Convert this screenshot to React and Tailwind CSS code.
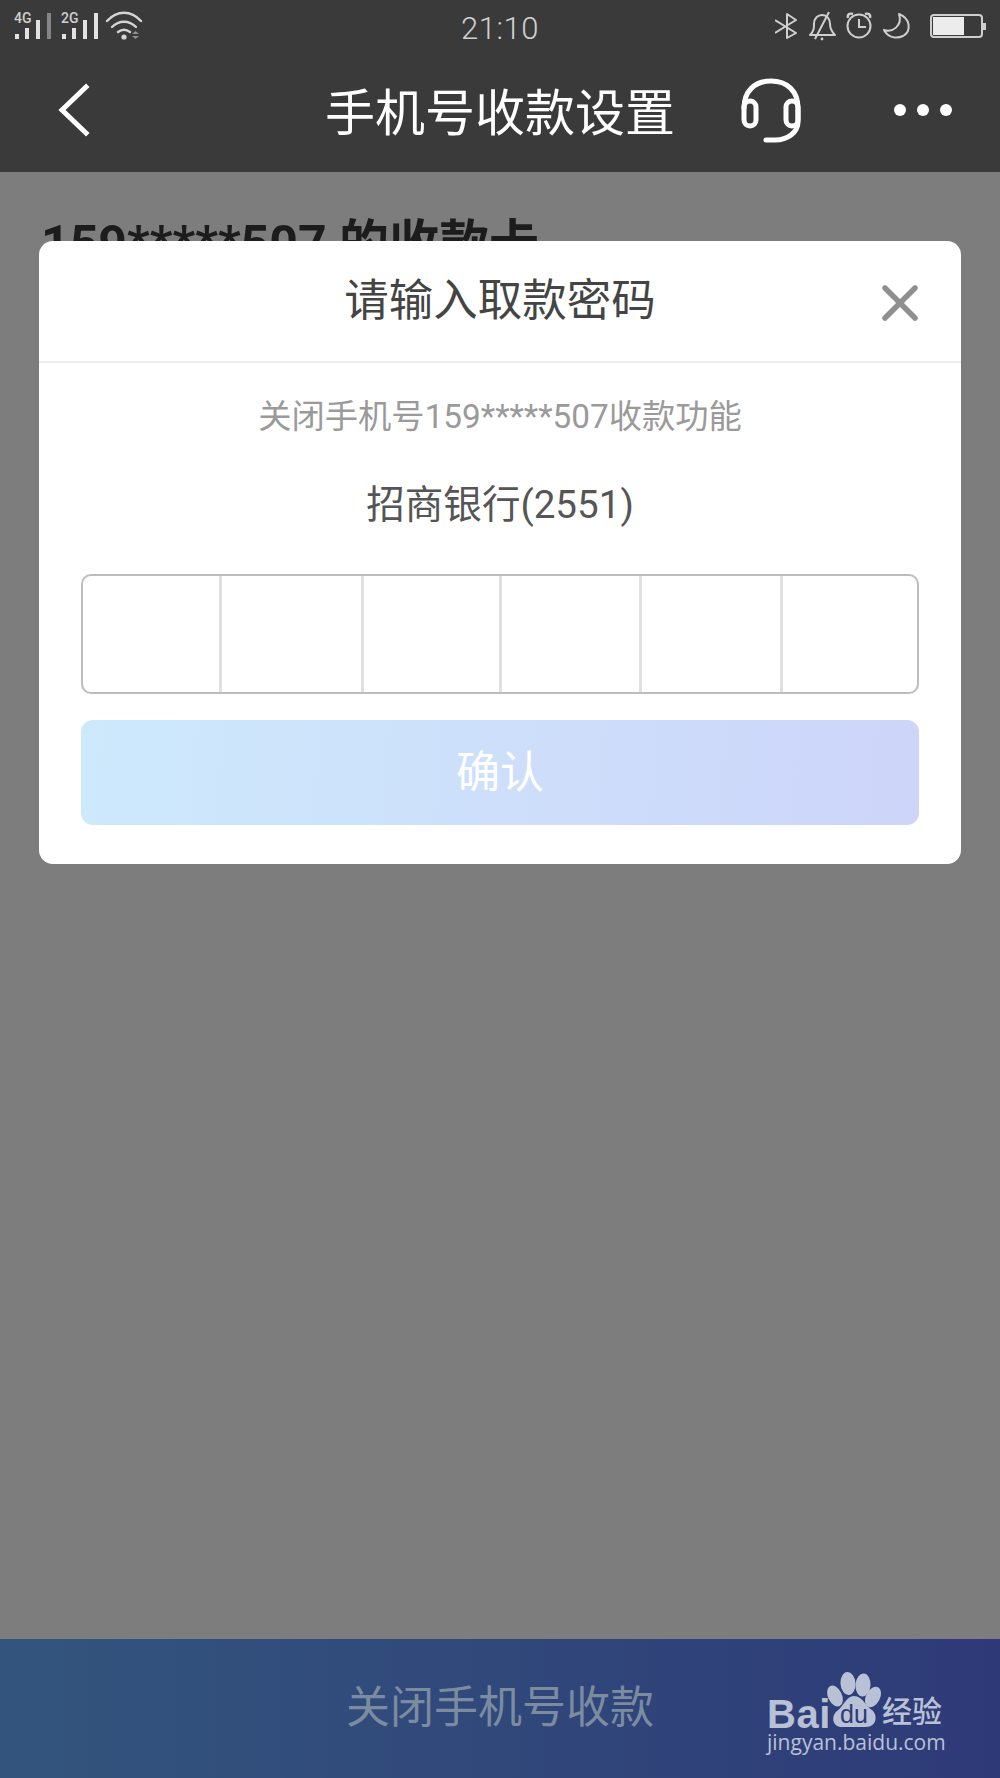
const SignalIcon = ({ label, x, dim }) => (
  <g>
    <text x={x - 1} y="22" fontSize="14" fontWeight="500" fill="#d0d0d0" fontFamily="Roboto, sans-serif">{label}</text>
    <rect x={x} y="33" width="4" height="5" fill="#e2e2e2" />
    <rect x={x + 10} y="27" width="4" height="11" fill="#e2e2e2" />
    <rect x={x + 21} y="19" width="4" height="19" fill="#e2e2e2" />
    <rect x={x + 32} y="12" width="4" height="26" fill={dim ? "#858585" : "#e2e2e2"} />
  </g>
)

const StatusLeft = () => (
  <svg width="145" height="50" viewBox="0 0 145 50" fill="none">
    <SignalIcon label="4G" x={15} dim />
    <SignalIcon label="2G" x={62} />
    <path d="M107 20 C117 9 131 9 141 20" stroke="#d4d4d4" strokeWidth="2.4" strokeLinecap="round" />
    <path d="M112 26 C119 19 129 19 136 26" stroke="#d4d4d4" strokeWidth="2.4" strokeLinecap="round" />
    <path d="M118 31 C122 28 126 28 130 31" stroke="#d4d4d4" strokeWidth="2.4" strokeLinecap="round" />
    <circle cx="124" cy="36" r="2.6" fill="#d4d4d4" />
    <path d="M132 33 L139 33 L135.5 30 Z M132 35 L139 35 L135.5 38 Z" fill="#8f8f8f" />
  </svg>
)

const StatusRight = () => (
  <svg width="225" height="50" viewBox="0 0 225 50" fill="none" stroke="#cfcfcf" strokeWidth="2">
    {/* bluetooth */}
    <path d="M0 19 L21 32 L12 37 L12 13 L21 19 L0 32" strokeLinejoin="round" />
    {/* muted bell */}
    <path d="M35 34 C39 30 39 27 39 23 C39 17 43 14 47 14 C52 14 55 18 55 23 C55 28 57 31 60 34 Z" strokeLinejoin="round" />
    <path d="M54 11 L40 38" />
    <circle cx="47" cy="38" r="1.4" fill="#cfcfcf" stroke="none" />
    {/* alarm */}
    <circle cx="84" cy="25" r="11.5" />
    <path d="M84 18 V26 H91" />
    <path d="M73 17 C72 13 75 12 78 13 M95 17 C96 13 93 12 90 13" strokeWidth="2.4" />
    {/* moon */}
    <path d="M124 13 C135 17 137 30 128 35 C122 38 113 37 109 29 C117 32 128 25 124 13 Z" strokeLinejoin="round" />
    {/* battery */}
    <rect x="156" y="14" width="51" height="22" rx="3" />
    <rect x="158" y="16" width="31" height="18" fill="#ececec" stroke="none" />
    <rect x="208" y="22" width="3" height="7" fill="#cfcfcf" stroke="none" />
  </svg>
)

const Headset = () => (
  <svg width="60" height="66" viewBox="0 0 60 66" fill="none" stroke="#fff" strokeWidth="5" strokeLinecap="round" strokeLinejoin="round">
    <path d="M3 30 C3 13 14 3 30 3 C46 3 57 13 57 30 V44 C57 54 47 62 34 62 H25" />
    <rect x="3" y="23" width="12" height="25" rx="6" />
    <rect x="45" y="23" width="12" height="25" rx="6" />
  </svg>
)

const BaiduLogo = () => (
  <div className="absolute left-[767px] top-[33px] w-[180px] h-[90px] text-[#b9c1d6]">
    <svg className="absolute left-[55px] top-0" width="70" height="62" viewBox="0 0 70 62" fill="#b9c1d6">
      <ellipse cx="26" cy="11.5" rx="7.5" ry="11.5" transform="rotate(-4 26 11.5)" />
      <ellipse cx="41" cy="13" rx="7.5" ry="11.5" transform="rotate(4 41 13)" />
      <ellipse cx="13" cy="24" rx="7" ry="11" transform="rotate(-26 13 24)" />
      <ellipse cx="51" cy="25" rx="7" ry="11" transform="rotate(28 51 25)" />
      <path d="M32 24 C41 24 43 34 50 38 C56 43 55 55 44 55 H20 C10 55 9 44 15 39 C22 34 24 24 32 24 Z" />
    </svg>
    <span className="absolute left-0 top-[28px] font-['Liberation_Sans',sans-serif] font-bold text-[40px] leading-[28px] tracking-[0.5px]">Bai</span>
    <span className="absolute left-[73px] top-[28px] font-['Liberation_Sans',sans-serif] text-[25px] leading-[28px] text-[#2e3b77]">du</span>
    <span className="absolute left-[115px] top-[22px] text-[30px] leading-[36px] font-medium whitespace-nowrap">经验</span>
    <span className="absolute left-0 top-[58px] font-['Open_Sans',sans-serif] text-[21px] leading-[24px] whitespace-nowrap">jingyan.baidu.com</span>
  </div>
)

export default function App() {
  return (
    <div className="relative w-[1000px] h-[1778px] flex flex-col overflow-hidden bg-[#7d7d7d] font-['Roboto','Noto_Sans_CJK_SC',sans-serif]">
      <div className="bg-[#3a3a3a] h-[172px] shrink-0 flex flex-col">
        <div className="h-[50px] grid grid-cols-[1fr_auto_1fr] items-center">
          <StatusLeft />
          <span className="mt-[6px] text-[31px] font-light text-[#d0d0d0] tracking-[0.5px]">21:10</span>
          <div className="flex justify-end"><StatusRight /></div>
        </div>
        <div className="h-[122px] grid grid-cols-[1fr_auto_1fr] items-center pb-[2px]">
          <svg className="ml-[58px]" width="34" height="54" viewBox="0 0 34 54" fill="none" stroke="#fff" strokeWidth="5" strokeLinecap="square">
            <path d="M28 4 L4 27 L28 50" />
          </svg>
          <h1 className="mt-[8px] text-[50px] leading-[60px] text-white font-normal">手机号收款设置</h1>
          <div className="flex items-center">
            <span className="ml-[66px] mt-[2px] block"><Headset /></span>
            <div className="ml-[93px] flex gap-[11px]">
              <i className="block w-[12px] h-[12px] rounded-full bg-white" />
              <i className="block w-[12px] h-[12px] rounded-full bg-white" />
              <i className="block w-[12px] h-[12px] rounded-full bg-white" />
            </div>
          </div>
        </div>
      </div>

      <div className="flex-1 pl-[41px] pt-[43px]">
        <p className="text-[50px] leading-[58px] font-bold text-[#1c1c1c]">159*****507 的收款卡</p>
      </div>

      <div className="relative h-[139px] shrink-0 bg-gradient-to-r from-[#33557d] to-[#2e3a78] flex items-center justify-center">
        <span className="text-[44px] text-[#7b8ba0] leading-[52px] mb-[2px]">关闭手机号收款</span>
        <BaiduLogo />
      </div>

      {/* dialog */}
      <div className="absolute left-[39px] top-[241px] w-[922px] h-[623px] bg-white rounded-[14px] flex flex-col">
        <div className="relative h-[122px] shrink-0 border-b-2 border-[#ececec] flex items-center justify-center">
          <h2 className="text-[44.5px] leading-[52px] font-normal text-[#444]">请输入取款密码</h2>
          <svg className="absolute right-[43px] top-[44px]" width="36" height="36" viewBox="0 0 36 36" fill="none" stroke="#8f8f8f" strokeWidth="5.5" strokeLinecap="round">
            <path d="M3 3 L33 33 M33 3 L3 33" />
          </svg>
        </div>
        <div className="px-[42px] flex flex-col items-center">
          <p className="mt-[34px] text-[33.3px] leading-[40px] text-[#9a9a9a]">关闭手机号159*****507收款功能</p>
          <p className="mt-[45px] text-[38.6px] leading-[46px] text-[#555]">招商银行(2551)</p>
          <div className="mt-[46px] w-full h-[120px] grid grid-cols-[139px_142px_138px_140px_141px_1fr] border-2 border-[#bdbdbd] rounded-[10px]">
            <div className="border-r-[3px] border-[#e0e0e0]" />
            <div className="border-r-[3px] border-[#e0e0e0]" />
            <div className="border-r-[3px] border-[#e0e0e0]" />
            <div className="border-r-[3px] border-[#e0e0e0]" />
            <div className="border-r-[3px] border-[#e0e0e0]" />
            <div />
          </div>
          <button className="mt-[26px] w-full h-[105px] rounded-[12px] bg-linear-95 from-[#cde9fc] to-[#cdd5f9] text-white text-[44px] leading-[52px]">确认</button>
        </div>
      </div>
    </div>
  )
}
